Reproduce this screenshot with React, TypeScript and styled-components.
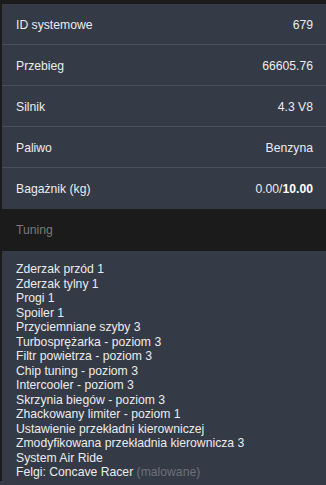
import React from "react";
import styled, { createGlobalStyle } from "styled-components";

const Global = createGlobalStyle`
  html, body { margin: 0; padding: 0; background: #343a46; }
  body { font-family: "Liberation Sans", Arial, sans-serif; }
`;

const Frame = styled.div`
  border-left: 2px solid #1b1b1b;
  border-top: 4px solid #1b1b1b;
  background: #343a46;
  min-height: 481px;
  box-sizing: border-box;
`;

const InfoRow = styled.div<{ $last?: boolean }>`
  display: flex;
  justify-content: space-between;
  align-items: center;
  height: 40px;
  padding: 1px 13px 0 14px;
  box-sizing: border-box;
  height: 41px;
  border-bottom: ${(p) => (p.$last ? "none" : "1px solid #4a505b")};
  color: #ececec;
  font-size: 12.2px;
`;

const Value = styled.span`
  text-align: right;
  b { font-weight: 700; color: #ffffff; }
`;

const SectionHeader = styled.div`
  display: flex;
  align-items: center;
  height: 42px;
  margin-left: -2px;
  padding-left: 16px;
  background: #1b1b1b;
  color: #7a7a7a;
  font-size: 12.2px;
`;

const List = styled.ul`
  list-style: none;
  margin: 0;
  padding: 11px 14px 0;
  color: #ececec;
  font-size: 12.2px;
  line-height: 14.5px;
`;

const Muted = styled.span`
  color: #6c717b;
`;

const rows: [string, React.ReactNode][] = [
  ["ID systemowe", "679"],
  ["Przebieg", "66605.76"],
  ["Silnik", "4.3 V8"],
  ["Paliwo", "Benzyna"],
  ["Bagażnik (kg)", <>0.00/<b>10.00</b></>],
];

const items = [
  "Zderzak przód 1",
  "Zderzak tylny 1",
  "Progi 1",
  "Spoiler 1",
  "Przyciemniane szyby 3",
  "Turbosprężarka - poziom 3",
  "Filtr powietrza - poziom 3",
  "Chip tuning - poziom 3",
  "Intercooler - poziom 3",
  "Skrzynia biegów - poziom 3",
  "Zhackowany limiter - poziom 1",
  "Ustawienie przekładni kierowniczej",
  "Zmodyfikowana przekładnia kierownicza 3",
  "System Air Ride",
];

export default function App() {
  return (
    <>
      <Global />
      <Frame>
        {rows.map(([k, v], i) => (
          <InfoRow key={k} $last={i === rows.length - 1}>
            <span>{k}</span>
            <Value>{v}</Value>
          </InfoRow>
        ))}
        <SectionHeader>Tuning</SectionHeader>
        <List>
          {items.map((t) => (
            <li key={t}>{t}</li>
          ))}
          <li>
            Felgi: Concave Racer <Muted>(malowane)</Muted>
          </li>
        </List>
      </Frame>
    </>
  );
}
